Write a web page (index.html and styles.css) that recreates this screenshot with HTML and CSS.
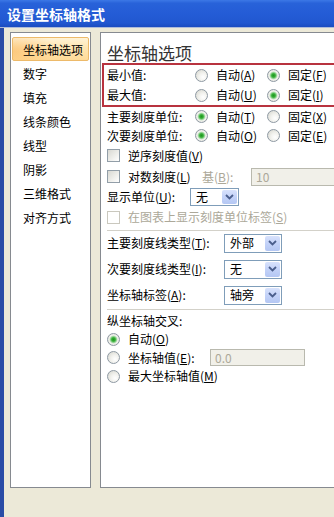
FILE: index.html
```html
<!DOCTYPE html>
<html lang="zh-CN">
<head>
<meta charset="utf-8">
<title>设置坐标轴格式</title>
<link rel="stylesheet" href="styles.css">
</head>
<body>
<div class="window">
  <div class="titlebar">设置坐标轴格式</div>
  <div class="client">
    <div class="nav">
      <div class="nav-item sel">坐标轴选项</div>
      <div class="nav-item">数字</div>
      <div class="nav-item">填充</div>
      <div class="nav-item">线条颜色</div>
      <div class="nav-item">线型</div>
      <div class="nav-item">阴影</div>
      <div class="nav-item">三维格式</div>
      <div class="nav-item">对齐方式</div>
    </div>
    <div class="pane">
      <div class="heading">坐标轴选项</div>
      <div class="redbox">
        <div class="row r20">
          <span class="lbl">最小值:</span>
          <span class="opt"><span class="radio"></span><span>自动(<u>A</u>)</span></span>
          <span class="opt"><span class="radio on"></span><span>固定(<u>F</u>)</span></span>
        </div>
        <div class="row r20">
          <span class="lbl">最大值:</span>
          <span class="opt"><span class="radio"></span><span>自动(<u>U</u>)</span></span>
          <span class="opt"><span class="radio on"></span><span>固定(<u>I</u>)</span></span>
        </div>
      </div>
      <div class="row r19">
        <span class="lbl">主要刻度单位:</span>
        <span class="opt"><span class="radio on"></span><span>自动(<u>T</u>)</span></span>
        <span class="opt"><span class="radio"></span><span>固定(<u>X</u>)</span></span>
      </div>
      <div class="row r19">
        <span class="lbl">次要刻度单位:</span>
        <span class="opt"><span class="radio on"></span><span>自动(<u>O</u>)</span></span>
        <span class="opt"><span class="radio"></span><span>固定(<u>E</u>)</span></span>
      </div>
      <div class="row r21">
        <span class="check"></span><span>逆序刻度值(<u>V</u>)</span>
      </div>
      <div class="row r21">
        <span class="check"></span><span class="lbl-log">对数刻度(<u>L</u>)</span>
        <span class="dis lbl-base">基(<u>B</u>):</span>
        <span class="input w-base">10</span>
      </div>
      <div class="row r20">
        <span class="lbl-unit">显示单位(<u>U</u>):</span>
        <span class="select w-unit"><span class="val">无</span><span class="btn"><svg width="9" height="6" viewBox="0 0 9 6"><polyline points="1,1 4.5,4.5 8,1" fill="none" stroke="#4A5E8C" stroke-width="1.8"/></svg></span></span>
      </div>
      <div class="row r20">
        <span class="check disabled"></span><span class="dis">在图表上显示刻度单位标签(<u>S</u>)</span>
      </div>
      <div class="sep sep1"></div>
      <div class="row r20">
        <span class="lbl-tick">主要刻度线类型(<u>T</u>):</span>
        <span class="select"><span class="val">外部</span><span class="btn"><svg width="9" height="6" viewBox="0 0 9 6"><polyline points="1,1 4.5,4.5 8,1" fill="none" stroke="#4A5E8C" stroke-width="1.8"/></svg></span></span>
      </div>
      <div class="row r20 gap6">
        <span class="lbl-tick">次要刻度线类型(<u>I</u>):</span>
        <span class="select"><span class="val">无</span><span class="btn"><svg width="9" height="6" viewBox="0 0 9 6"><polyline points="1,1 4.5,4.5 8,1" fill="none" stroke="#4A5E8C" stroke-width="1.8"/></svg></span></span>
      </div>
      <div class="row r20 gap6">
        <span class="lbl-tick">坐标轴标签(<u>A</u>):</span>
        <span class="select"><span class="val">轴旁</span><span class="btn"><svg width="9" height="6" viewBox="0 0 9 6"><polyline points="1,1 4.5,4.5 8,1" fill="none" stroke="#4A5E8C" stroke-width="1.8"/></svg></span></span>
      </div>
      <div class="sep sep2"></div>
      <div class="row r19">纵坐标轴交叉:</div>
      <div class="row r18">
        <span class="radio on"></span><span class="rtext">自动(<u>O</u>)</span>
      </div>
      <div class="row r19">
        <span class="radio"></span><span class="rtext lbl-axis">坐标轴值(<u>E</u>):</span>
        <span class="input w-axis">0.0</span>
      </div>
      <div class="row r18">
        <span class="radio"></span><span class="rtext">最大坐标轴值(<u>M</u>)</span>
      </div>
    </div>
  </div>
</div>
</body>
</html>
```

FILE: styles.css
```css
html, body {
  margin: 0;
  padding: 0;
  background: #ECE9D8;
}

body {
  font-family: "Noto Sans CJK SC", "Noto Sans", sans-serif;
  font-size: 12px;
  color: #000;
}

.window {
  width: 334px;
  height: 517px;
  display: flex;
  flex-direction: column;
  overflow: hidden;
  background: #ECE9D8;
}

.titlebar {
  flex: none;
  height: 27px;
  padding-left: 7px;
  display: flex;
  align-items: center;
  color: #fff;
  font-weight: bold;
  font-size: 14px;
  background: linear-gradient(#3C78E6 0%, #2862D9 12%, #245CD6 50%, #2157D0 85%, #1B4CC0 100%);
  border-bottom: 1px solid #AEBBD9;
}

.client {
  flex: 1;
  display: flex;
  align-items: flex-start;
  gap: 9px;
  padding: 4px 0 0 6px;
  border-left: 4px solid #2A4CA6;
  box-sizing: border-box;
  min-height: 0;
}

.nav {
  flex: none;
  width: 81px;
  height: 456px;
  box-sizing: border-box;
  border: 1px solid #868A90;
  background: #fff;
  padding: 4px 1px 0;
}

.nav-item {
  height: 24px;
  box-sizing: border-box;
  border: 1px solid transparent;
  padding-left: 10px;
  display: flex;
  align-items: center;
  white-space: nowrap;
}

.nav-item.sel {
  border-color: #EDBA6A;
  border-radius: 2px;
  background:
    radial-gradient(ellipse 60% 90% at 0% 60%, rgba(250, 180, 90, 0.55), rgba(250, 180, 90, 0) 100%),
    linear-gradient(#FFF3D6 0%, #FFE6B2 45%, #FFDB98 100%);
}

.pane {
  flex: 1;
  min-width: 0;
  height: 456px;
  box-sizing: border-box;
  border: 1px solid #868A90;
  border-right: none;
  background: #fff;
  padding-left: 6px;
  overflow: hidden;
}

.heading {
  padding-top: 10px;
  height: 20px;
  line-height: 20px;
  font-size: 17px;
  color: #333;
  white-space: nowrap;
}

.redbox {
  margin-left: -5px;
  margin-right: -40px;
  border: 2px solid #B8333F;
  padding-left: 3px;
}

.row {
  display: flex;
  align-items: center;
  white-space: nowrap;
  line-height: 1;
}

.r18 { height: 18px; }
.r19 { height: 19px; }
.r20 { height: 20px; }
.r21 { height: 21px; }
.gap6 { margin-top: 6px; }

.lbl {
  flex: none;
  width: 88px;
}

.opt {
  flex: none;
  width: 72px;
  display: flex;
  align-items: center;
  gap: 8px;
}

.radio {
  flex: none;
  width: 11px;
  height: 11px;
  border: 1px solid #8E99A3;
  border-radius: 50%;
  background: radial-gradient(circle at 65% 65%, #ffffff 0%, #F2F2EE 40%, #D3D3CB 100%);
}

.radio.on {
  background: radial-gradient(circle at 50% 50%, #1E961E 0px, #36AE36 1.8px, #9FD89F 3.2px, #F2F2EE 4.3px, #D6D6CE 100%);
}

.rtext {
  margin-left: 8px;
}

.check {
  flex: none;
  width: 11px;
  height: 11px;
  border: 1px solid #929EA8;
  background: linear-gradient(135deg, #D8D8D2 0%, #ECECE8 50%, #FFFFFF 100%);
  margin-right: 8px;
}

.check.disabled {
  border-color: #CAC8BE;
  background: #fff;
}

.dis {
  color: #ACA899;
}

.lbl-log {
  flex: none;
  width: 74px;
}

.lbl-base {
  flex: none;
  width: 49px;
}

.input {
  flex: none;
  height: 18px;
  box-sizing: border-box;
  border: 1px solid #B9B9AE;
  background: #F1F0E9;
  color: #ACA899;
  padding-left: 4px;
  display: flex;
  align-items: center;
}

.w-base { width: 110px; }
.w-axis { width: 95px; height: 17px; }

.lbl-unit { flex: none; width: 83px; }
.lbl-tick { flex: none; width: 117px; }
.lbl-axis { flex: none; width: 82px; }

.select {
  flex: none;
  width: 58px;
  height: 19px;
  box-sizing: border-box;
  border: 1px solid #7F9DB9;
  background: #fff;
  display: flex;
  align-items: stretch;
}

.select.w-unit {
  width: 49px;
  height: 18px;
}

.select .val {
  flex: 1;
  padding-left: 5px;
  display: flex;
  align-items: center;
}

.select .btn {
  flex: none;
  width: 15px;
  margin: 1px;
  border-radius: 2px;
  background: linear-gradient(#D8E2FC 0%, #C3D2F8 50%, #B4C7F3 100%);
  display: flex;
  align-items: center;
  justify-content: center;
}

.sep {
  height: 1px;
  background: #D3D1C9;
  margin-right: -40px;
}

.sep1 { margin-top: 3px; margin-bottom: 2px; }
.sep2 { margin-top: 4px; margin-bottom: 1px; }
```
